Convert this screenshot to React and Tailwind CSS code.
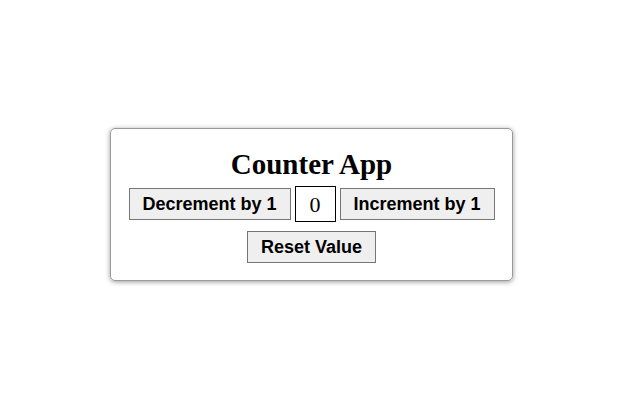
export default function App() {
  const btn =
    "h-[32px] bg-[#efefef] border border-[#767676] text-[18px] font-bold text-black font-['Liberation_Sans',Arial,sans-serif]";
  return (
    <div className="w-[623px] h-[409px] flex items-center justify-center bg-white">
      <div className="w-[403px] h-[153px] rounded-[5px] border border-[#9a9a9a] shadow-[0_1px_5px_rgba(0,0,0,0.4)] flex flex-col items-center pt-[17px]">
        <h1 className="text-[29px] leading-[36px] font-bold font-['Liberation_Serif','Times_New_Roman',serif] text-black">
          Counter App
        </h1>
        <div className="flex items-center gap-[4px] mt-[4px]">
          <button className={`${btn} w-[162px]`}>Decrement by 1</button>
          <div className="w-[41px] h-[36px] border border-black flex items-center justify-center text-[22px] font-['Liberation_Serif','Times_New_Roman',serif]">
            0
          </div>
          <button className={`${btn} w-[155px]`}>Increment by 1</button>
        </div>
        <button className={`${btn} w-[129px] mt-[9px]`}>Reset Value</button>
      </div>
    </div>
  );
}
